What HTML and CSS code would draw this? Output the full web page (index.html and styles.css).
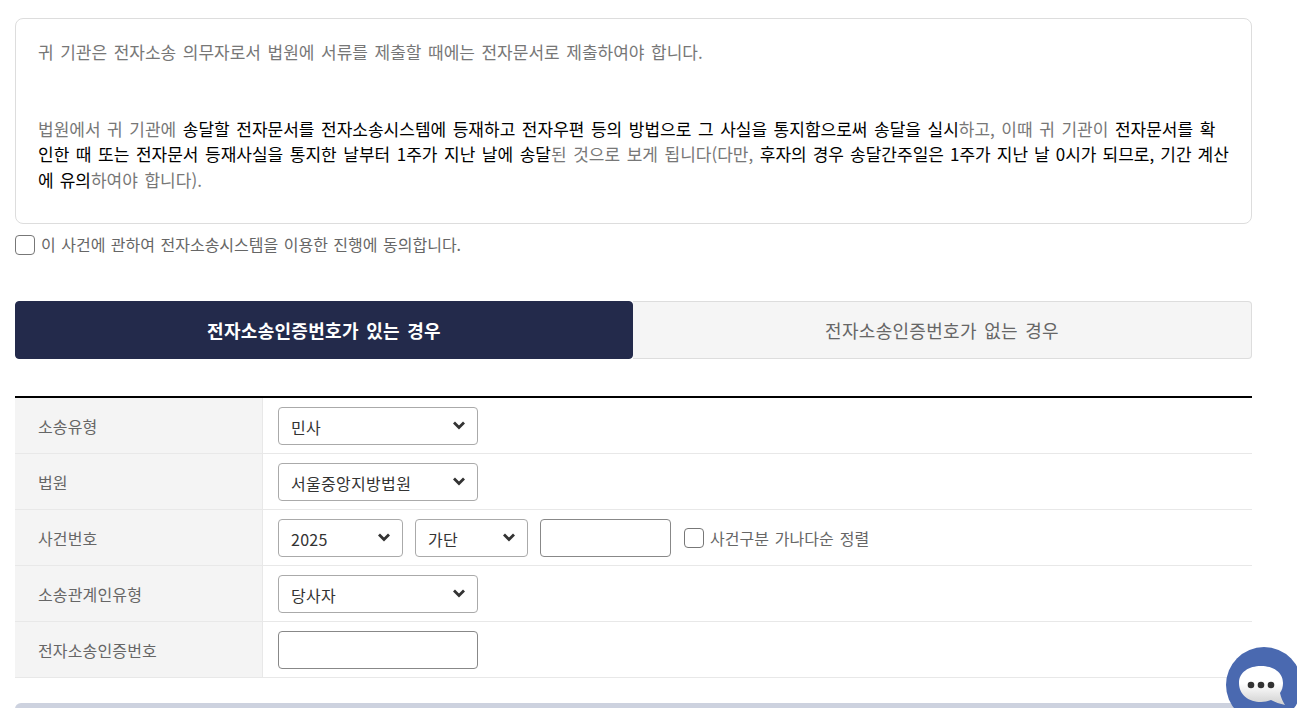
FILE: index.html
```html
<!DOCTYPE html>
<html lang="ko">

<head>
    <meta charset="UTF-8">
    <meta name="viewport" content="width=device-width, initial-scale=1.0">
    <title>전자소송 동의</title>
    <link rel="stylesheet" href="styles.css">
</head>

<body>
    <div class="wrap">
        <!-- 안내문 -->
        <div class="notice">
            귀 기관은 전자소송 의무자로서 법원에 서류를 제출할 때에는 전자문서로 제출하여야 합니다.<br><br><br>
            법원에서 귀 기관에 <span class="em">송달할 전자문서를 전자소송시스템에 등재하고 전자우편 등의 방법으로 그 사실을 통지함으로써 송달을 실시</span>하고, 이때 귀 기관이 <span class="em">전자문서를 확<br>인한 때 또는 전자문서 등재사실을 통지한 날부터 1주가 지난 날에 송달</span>된 것으로 보게 됩니다(다만, <span class="em tight">후자의 경우 송달간주일은 1주가 지난 날 0시가 되므로, 기간 계산<br>에 유의</span>하여야 합니다).
        </div>

        <label class="agree">
            <input type="checkbox" class="check">
            <span class="agree-text">이 사건에 관하여 전자소송시스템을 이용한 진행에 동의합니다.</span>
        </label>

        <div class="tabs">
            <div class="tab active">전자소송인증번호가 있는 경우</div>
            <div class="tab">전자소송인증번호가 없는 경우</div>
        </div>

        <!-- 입력 폼 -->
        <div class="form-table">
            <div class="form-row">
                <div class="form-label">소송유형</div>
                <div class="form-cell">
                    <select class="sel w200"><option>민사</option></select>
                </div>
            </div>
            <div class="form-row">
                <div class="form-label">법원</div>
                <div class="form-cell">
                    <select class="sel w200"><option>서울중앙지방법원</option></select>
                </div>
            </div>
            <div class="form-row">
                <div class="form-label">사건번호</div>
                <div class="form-cell">
                    <select class="sel w125"><option>2025</option></select>
                    <select class="sel w113"><option>가단</option></select>
                    <input type="text" class="inp w131">
                    <label class="sort-opt">
                        <input type="checkbox" class="check">
                        <span>사건구분 가나다순 정렬</span>
                    </label>
                </div>
            </div>
            <div class="form-row">
                <div class="form-label">소송관계인유형</div>
                <div class="form-cell">
                    <select class="sel w200"><option>당사자</option></select>
                </div>
            </div>
            <div class="form-row">
                <div class="form-label">전자소송인증번호</div>
                <div class="form-cell">
                    <input type="text" class="inp w200">
                </div>
            </div>
        </div>

        <div class="bottom-bar"></div>
    </div>

    <!-- 채팅 버튼 -->
    <div class="chat-btn">
        <svg width="48" height="41" viewBox="0 0 48 41">
            <defs>
                <linearGradient id="bubble" x1="0" y1="0" x2="0" y2="1">
                    <stop offset="0.45" stop-color="#ffffff"/>
                    <stop offset="1" stop-color="#cfcfcf"/>
                </linearGradient>
            </defs>
            <path d="M23 1C35 1 45 7 45 18C45 22 44 25 42 28C43 33 45 37 47 40C42 39 37 37 33 35C30 36 26 37 23 37C11 37 1 30 1 18C1 7 11 1 23 1Z" fill="url(#bubble)"/>
            <circle cx="13" cy="20" r="3.3" fill="#333"/>
            <circle cx="23" cy="20" r="3.3" fill="#333"/>
            <circle cx="33" cy="20" r="3.3" fill="#333"/>
        </svg>
    </div>
</body>

</html>
```

FILE: styles.css
```css
html,
body {
    height: 100%;
    overflow: hidden;
}

body {
    font-family: "Noto Sans CJK KR", "Noto Sans", sans-serif;
    font-size: 16px;
    color: #666;
    background-color: #fff;
    margin: 0;
    padding: 0;
}

.wrap {
    width: 1237px;
    margin-left: 15px;
    padding-top: 18px;
}

/* 안내문 */
.notice {
    border: 1px solid #ddd;
    border-radius: 8px;
    padding: 20px 15px 31px 22px;
    font-size: 17px;
    line-height: 25.5px;
    word-spacing: 1.8px;
    color: #777;
}

.em {
    color: #000;
}

.tight {
    word-spacing: 1.3px;
}

.agree {
    display: flex;
    align-items: center;
    gap: 6px;
    margin-top: 11px;
    height: 20px;
    word-spacing: 1px;
}

.agree-text {
    margin-bottom: 2px;
}

.check {
    appearance: none;
    width: 20px;
    height: 20px;
    margin: 0;
    border: 1px solid #777;
    border-radius: 4px;
    background-color: #fff;
    flex: none;
}

/* 탭 */
.tabs {
    display: flex;
    margin-top: 46px;
}

.tab {
    flex: 1;
    height: 58px;
    box-sizing: border-box;
    line-height: 56px;
    text-align: center;
    font-size: 18px;
    letter-spacing: 0.3px;
    word-spacing: 2px;
    background-color: #f5f5f5;
    border: 1px solid #ddd;
    border-left: none;
    border-radius: 0 4px 4px 0;
}

.tab.active {
    flex: none;
    width: 618px;
    box-sizing: border-box;
    background-color: #232a4b;
    border: 1px solid #232a4b;
    border-radius: 4px;
    color: #fff;
    font-weight: 700;
}

/* 입력 폼 */
.form-table {
    margin-top: 37px;
    border-top: 2px solid #000;
}

.form-row {
    display: flex;
    height: 56px;
    box-sizing: border-box;
    border-bottom: 1px solid #e8e8e8;
}

.form-label {
    width: 248px;
    padding-left: 23px;
    display: flex;
    align-items: center;
    box-sizing: border-box;
    background-color: #f4f4f4;
    border-right: 1px solid #e8e8e8;
    letter-spacing: 0.15px;
    flex: none;
}

.form-cell {
    display: flex;
    align-items: center;
    gap: 12px;
    padding: 1px 0 0 15px;
}

.sel,
.inp {
    height: 38px;
    box-sizing: border-box;
    border-radius: 4px;
    font-family: inherit;
    font-size: 16px;
    letter-spacing: 0.3px;
    background-color: #fff;
    margin: 0;
}

.sel {
    appearance: none;
    border: 1px solid #aaa;
    color: #333;
    padding: 1px 30px 0 12px;
    background-image: url("data:image/svg+xml,%3Csvg xmlns='http://www.w3.org/2000/svg' width='12' height='9'%3E%3Cpath d='M1 1.5l5 5 5-5' fill='none' stroke='%23333' stroke-width='2.8'/%3E%3C/svg%3E");
    background-repeat: no-repeat;
    background-position: right 12px top 13px;
}

.inp {
    border: 1px solid #888;
}

.w200 {
    width: 200px;
}

.w125 {
    width: 125px;
}

.w113 {
    width: 113px;
}

.w131 {
    width: 131px;
}

.sort-opt {
    display: flex;
    align-items: center;
    gap: 6px;
    word-spacing: 1.5px;
    margin-left: 1px;
}

.bottom-bar {
    height: 60px;
    margin-top: 25px;
    background-color: #cdd2df;
    border-radius: 6px;
}

/* 채팅 버튼 */
.chat-btn {
    position: fixed;
    left: 1226px;
    top: 647px;
    width: 76px;
    height: 76px;
    border-radius: 50%;
    background-color: #4a69b0;
    display: flex;
    align-items: center;
    justify-content: center;
}

.chat-btn svg {
    margin-right: 4px;
}
```
